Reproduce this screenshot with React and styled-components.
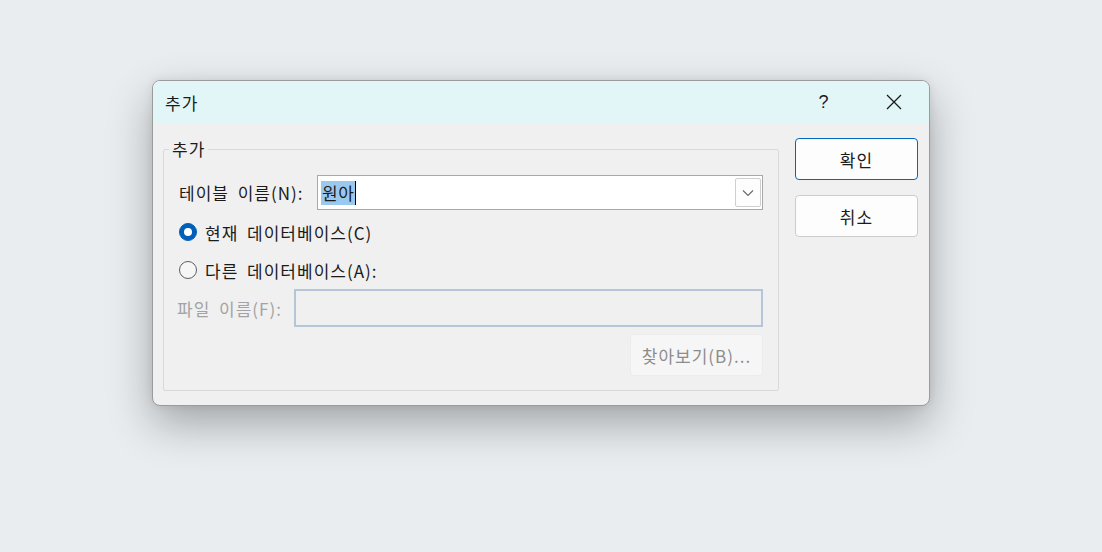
import React from 'react';
import styled, { createGlobalStyle } from 'styled-components';

const GlobalStyle = createGlobalStyle`
  html, body {
    margin: 0;
    padding: 0;
    background: #e9edf0;
  }
  body {
    font-family: "Noto Sans CJK KR", "Noto Sans", sans-serif;
    color: #1b1b1b;
    font-size: 17px;
    letter-spacing: 1px;
    word-spacing: 4px;
  }
`;

const Page = styled.div`
  width: 1102px;
  height: 552px;
  padding: 80px 0 0 152px;
  box-sizing: border-box;
`;

const Dialog = styled.div`
  width: 778px;
  height: 326px;
  box-sizing: border-box;
  border: 1px solid #9b9b9b;
  border-radius: 8px;
  background: #f0f0f0;
  overflow: hidden;
  display: flex;
  flex-direction: column;
  box-shadow: 0 18px 44px rgba(0, 0, 0, 0.3), 0 0 10px rgba(0, 0, 0, 0.08);
`;

const TitleBar = styled.div`
  height: 42px;
  flex: none;
  display: flex;
  align-items: center;
  background: #e3f6f7;
  padding-left: 12px;
`;

const Title = styled.div`
  flex: 1;
`;

const TitleButton = styled.div`
  width: 70px;
  height: 42px;
  display: flex;
  align-items: center;
  justify-content: center;
  font-size: 18px;
  color: #1b1b1b;
  font-family: "Liberation Sans", sans-serif;
`;

const Body = styled.div`
  flex: 1;
  display: flex;
  align-items: flex-start;
  padding: 15px 11px 0 10px;
  gap: 16px;
`;

const Group = styled.fieldset`
  width: 616px;
  height: 253px;
  box-sizing: border-box;
  margin: 0;
  padding: 15px 15px 0 15px;
  border: 1px solid #d9d9d9;
  border-radius: 2px;
  display: flex;
  flex-direction: column;
`;

const Legend = styled.legend`
  padding: 0 3px;
  margin-left: -10px;
  line-height: 22px;
`;

const Row = styled.div`
  display: flex;
  align-items: center;
  height: ${p => p.h || 26}px;
  margin-top: ${p => p.mt || 0}px;
  justify-content: ${p => (p.end ? 'flex-end' : 'flex-start')};
`;

const Label = styled.span`
  color: ${p => (p.disabled ? '#a3a3a3' : '#1b1b1b')};
  width: ${p => p.w}px;
  margin-left: ${p => p.ml || 0}px;
  flex: none;
`;

const Combo = styled.div`
  flex: 1;
  height: 35px;
  box-sizing: border-box;
  border: 1px solid #a8a8a8;
  background: #fff;
  display: flex;
  align-items: center;
  padding: 0 1px 0 3px;
`;

const Selected = styled.span`
  background: #99c9ef;
  line-height: 24px;
  padding: 0 1px;
  letter-spacing: 0.5px;
`;

const Caret = styled.span`
  width: 1px;
  height: 24px;
  background: #000;
`;

const DropButton = styled.div`
  margin-left: auto;
  width: 26px;
  height: 29px;
  box-sizing: border-box;
  border: 1px solid #cfcfcf;
  border-radius: 2px;
  background: #fdfdfd;
  display: flex;
  align-items: center;
  justify-content: center;
`;

const RadioCircle = styled.span`
  width: 18px;
  height: 18px;
  box-sizing: border-box;
  border-radius: 50%;
  flex: none;
  margin-right: 8px;
  background: ${p => (p.checked ? '#005fb8' : '#f6f6f6')};
  border: 1px solid ${p => (p.checked ? '#005fb8' : '#5f5f5f')};
  display: flex;
  align-items: center;
  justify-content: center;

  &::after {
    content: '';
    display: ${p => (p.checked ? 'block' : 'none')};
    width: 8px;
    height: 8px;
    border-radius: 50%;
    background: #fff;
  }
`;

const RadioText = styled.span``;

const FileInput = styled.div`
  flex: 1;
  height: 38px;
  box-sizing: border-box;
  border: 2px solid #b5c6d8;
  background: #f0f0f0;
`;

const Button = styled.div`
  width: ${p => p.w || 123}px;
  height: 42px;
  box-sizing: border-box;
  border-radius: 4px;
  border: 1px solid ${p => (p.primary ? '#0067c0' : p.disabled ? '#ececec' : '#cccccc')};
  background: ${p => (p.disabled ? '#f6f6f6' : '#fdfdfd')};
  color: ${p => (p.disabled ? '#8d8d8d' : '#1b1b1b')};
  display: flex;
  align-items: center;
  justify-content: center;
  flex: none;
`;

const ButtonColumn = styled.div`
  display: flex;
  flex-direction: column;
  gap: 15px;
`;

const CloseIcon = () => (
  <svg width="16" height="16" viewBox="0 0 16 16">
    <path d="M1 1L15 15M15 1L1 15" stroke="#1b1b1b" strokeWidth="1.3" fill="none" />
  </svg>
);

const Chevron = () => (
  <svg width="12" height="8" viewBox="0 0 12 8">
    <path d="M1 1.5L6 6.5L11 1.5" stroke="#666" strokeWidth="1.1" fill="none" />
  </svg>
);

export default function App() {
  return (
    <>
      <GlobalStyle />
      <Page>
        <Dialog>
          <TitleBar>
            <Title>추가</Title>
            <TitleButton>?</TitleButton>
            <TitleButton><CloseIcon /></TitleButton>
          </TitleBar>
          <Body>
            <Group>
              <Legend>추가</Legend>
              <Row h={35}>
                <Label w={138}>테이블 이름(N):</Label>
                <Combo>
                  <Selected>원아</Selected>
                  <Caret />
                  <DropButton><Chevron /></DropButton>
                </Combo>
              </Row>
              <Row mt={9}>
                <RadioCircle checked />
                <RadioText>현재 데이터베이스(C)</RadioText>
              </Row>
              <Row mt={12}>
                <RadioCircle />
                <RadioText>다른 데이터베이스(A):</RadioText>
              </Row>
              <Row h={38} mt={6}>
                <Label disabled w={117} ml={-2}>파일 이름(F):</Label>
                <FileInput />
              </Row>
              <Row h={42} mt={7} end>
                <Button disabled w={133}>찾아보기(B)...</Button>
              </Row>
            </Group>
            <ButtonColumn>
              <Button primary>확인</Button>
              <Button>취소</Button>
            </ButtonColumn>
          </Body>
        </Dialog>
      </Page>
    </>
  );
}
